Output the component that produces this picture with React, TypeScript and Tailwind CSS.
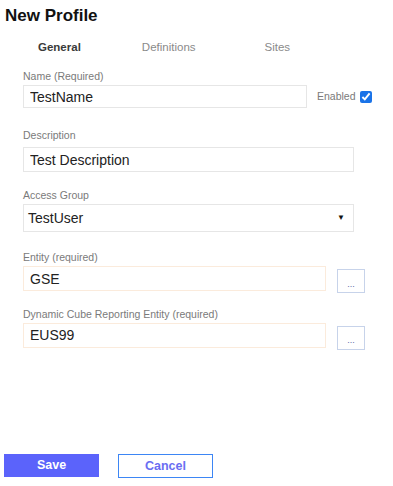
import { useState } from 'react';

const font = { fontFamily: '"Liberation Sans", Arial, sans-serif' };

function Label({ children }: { children: string }) {
    return <div className="text-[10.5px] leading-[12px] text-[#7a7a7a] mb-[3px]">{children}</div>;
}

function PickerButton() {
    return (
        <button className="w-[28px] h-[24px] border border-[#c7d3ea] bg-white text-[9px] leading-none text-[#5a6aa8] pt-[6px]">
            ...
        </button>
    );
}

export default function App() {
    const [tab, setTab] = useState('General');
    const [enabled, setEnabled] = useState(true);

    return (
        <div className="w-[393px] h-[486px] bg-white flex flex-col" style={font}>
            <h1 className="text-[17px] leading-[20px] font-bold text-[#111] pl-[5px] pt-[6px]">New Profile</h1>

            <div className="flex mt-[14px] text-[11.5px] leading-[14px]">
                {['General', 'Definitions', 'Sites'].map((t, i) => (
                    <button
                        key={t}
                        onClick={() => setTab(t)}
                        className={
                            (i === 0 ? 'ml-[38px] ' : i === 1 ? 'ml-[61px] ' : 'ml-[69px] ') +
                            (tab === t ? 'text-[#3a3a3a] font-semibold' : 'text-[#8a8a8a]')
                        }
                    >
                        {t}
                    </button>
                ))}
            </div>

            <div className="pl-[23px] pt-[16px] flex flex-col">
                <Label>Name (Required)</Label>
                <div className="flex items-end">
                    <input
                        defaultValue="TestName"
                        className="w-[284px] h-[23px] border border-[#e6e6e6] px-[6px] text-[14px] text-[#222] outline-none"
                    />
                    <label className="flex items-center ml-[10px] mb-[3px] text-[10.5px] text-[#7a7a7a]">
                        Enabled
                        <input
                            type="checkbox"
                            checked={enabled}
                            onChange={(e) => setEnabled(e.target.checked)}
                            className="ml-[4px] w-[12px] h-[12px] accent-[#1a73e8]"
                        />
                    </label>
                </div>

                <div className="mt-[21px]">
                    <Label>Description</Label>
                    <input
                        defaultValue="Test Description"
                        className="mt-[3px] w-[331px] h-[25px] border border-[#e6e6e6] px-[6px] text-[14px] text-[#222] outline-none"
                    />
                </div>

                <div className="mt-[17px]">
                    <Label>Access Group</Label>
                    <div className="w-[331px] h-[28px] border border-[#e6e6e6] flex items-center justify-between pl-[4px] pr-[8px]">
                        <span className="text-[14px] text-[#222]">TestUser</span>
                        <span className="text-[8px] text-[#111]">▼</span>
                    </div>
                </div>

                <div className="mt-[19px]">
                    <Label>Entity (required)</Label>
                    <div className="flex items-start mt-[2px]">
                        <input
                            defaultValue="GSE"
                            className="w-[303px] h-[25px] border border-[#fbebdc] px-[6px] text-[14px] text-[#222] outline-none"
                        />
                        <div className="ml-[11px] mt-[3px]">
                            <PickerButton />
                        </div>
                    </div>
                </div>

                <div className="mt-[14px]">
                    <Label>Dynamic Cube Reporting Entity (required)</Label>
                    <div className="flex items-start">
                        <input
                            defaultValue="EUS99"
                            className="w-[303px] h-[25px] border border-[#fbebdc] px-[6px] text-[14px] text-[#222] outline-none"
                        />
                        <div className="ml-[11px] mt-[3px]">
                            <PickerButton />
                        </div>
                    </div>
                </div>
            </div>

            <div className="flex mt-auto mb-[8px] pl-[4px]">
                <button className="w-[95px] h-[23px] bg-[#5b63fb] text-white text-[12.5px] font-semibold">Save</button>
                <button className="ml-[19px] w-[95px] h-[24px] border border-[#3d86f5] text-[#6a6ef2] text-[12.5px] font-bold">
                    Cancel
                </button>
            </div>
        </div>
    );
}
